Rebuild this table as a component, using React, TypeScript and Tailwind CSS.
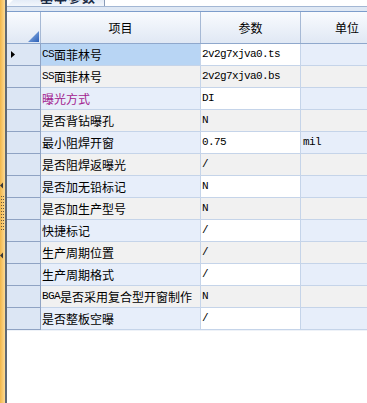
import React from 'react';

type Row = { name: string; value: string; unit?: string; accent?: boolean };

const rows: Row[] = [
    { name: 'CS面菲林号', value: '2v2g7xjva0.ts' },
    { name: 'SS面菲林号', value: '2v2g7xjva0.bs' },
    { name: '曝光方式', value: 'DI', accent: true },
    { name: '是否背钻曝孔', value: 'N' },
    { name: '最小阻焊开窗', value: '0.75', unit: 'mil' },
    { name: '是否阻焊返曝光', value: '/' },
    { name: '是否加无铅标记', value: 'N' },
    { name: '是否加生产型号', value: 'N' },
    { name: '快捷标记', value: '/' },
    { name: '生产周期位置', value: '/' },
    { name: '生产周期格式', value: '/' },
    { name: 'BGA是否采用复合型开窗制作', value: 'N' },
    { name: '是否整板空曝', value: '/' },
];

// ascii runs use a narrow mono face, the rest stays in the CJK face
const Txt = ({ text }: { text: string }) => (
    <>
        {text.split(/([\x00-\x7f]+)/).filter(Boolean).map((part, i) =>
            /^[\x00-\x7f]+$/.test(part) ? (
                <span key={i} className="font-['Liberation_Mono',monospace] text-[11px] tracking-[-0.6px]">{part}</span>
            ) : (
                <span key={i}>{part}</span>
            )
        )}
    </>
);

const SplitterGrip = () => (
    <div className="w-[5px] shrink-0 bg-linear-to-r from-[#f2b646] to-[#fddb92] flex flex-col">
        <svg width="5" height="80" className="mt-[182px]">
            <polygon points="0,3.5 3,0.5 3,6.5" fill="#3a3a3a" />
            {[0, 1, 2, 3, 4, 5, 6, 7, 8, 9, 10, 11].map(i => (
                <g key={i}>
                    <rect x="1" y={14 + i * 3} width="1" height="1" fill="#6b5a3a" />
                    <rect x="3" y={14 + i * 3} width="1" height="1" fill="#6b5a3a" />
                </g>
            ))}
            <polygon points="0,73.5 3,70.5 3,76.5" fill="#3a3a3a" />
        </svg>
    </div>
);

const TabStrip = () => (
    <div className="h-[12px] shrink-0 flex flex-col">
        <div className="h-[6px] flex">
            <div className="w-[98px] h-[6px] overflow-hidden bg-linear-to-b from-[#e4ecf7] to-[#f3f7fc] border-r border-[#8a9cb8] [clip-path:polygon(6px_0,100%_0,100%_100%,0_100%)]">
                <span className="block -mt-[10px] pl-[33px] text-[13px] font-bold tracking-[1px] text-[#1b2a44] whitespace-nowrap">基本参数</span>
            </div>
            <div className="flex-1 bg-white" />
        </div>
        <div className="h-[1px] bg-[#a3b7d4]" />
        <div className="h-[4px] bg-[#dfe8f4]" />
        <div className="h-[1px] bg-[#7d9dcb]" />
    </div>
);

const HeaderRow = () => (
    <div className="h-[32px] shrink-0 flex border-b border-[#8fa8cc] bg-linear-to-b from-[#f9fbfe] to-[#e0e8f4]">
        <div className="w-[34px] shrink-0 border-r border-[#a6b9d5] flex items-end justify-end pr-[1px] pb-[1px]">
            <svg width="11" height="11">
                <defs>
                    <linearGradient id="corner" x1="0" y1="0" x2="1" y2="1">
                        <stop offset="0" stopColor="#9cc0ee" />
                        <stop offset="1" stopColor="#2c5fb6" />
                    </linearGradient>
                </defs>
                <polygon points="11,0 11,11 0,11" fill="url(#corner)" />
            </svg>
        </div>
        <div className="w-[160px] shrink-0 border-r border-[#a6b9d5] flex items-center justify-center">项目</div>
        <div className="w-[100px] shrink-0 border-r border-[#a6b9d5] flex items-center justify-center">参数</div>
        <div className="w-[92px] shrink-0 flex items-center justify-center">单位</div>
    </div>
);

const DataRow = ({ row, index }: { row: Row; index: number }) => {
    const odd = index % 2 === 1;
    const selected = index === 0;
    const nameBg = selected ? 'bg-[#b8d5f4]' : odd ? 'bg-[#f1f1f1]' : 'bg-[#e7eefa]';
    const valueBg = odd ? 'bg-[#f1f1f1]' : 'bg-white';
    const unitBg = odd ? 'bg-[#f1f1f1]' : 'bg-[#e7eefa]';

    return (
        <div className="h-[22px] shrink-0 flex">
            <div className="w-[34px] shrink-0 bg-[#dce6f4] border-r border-b border-[#8fa3c3] flex items-center pl-[4px]">
                {selected && (
                    <svg width="4" height="7">
                        <polygon points="0,0 4,3.5 0,7" fill="#000" />
                    </svg>
                )}
            </div>
            <div className={`w-[160px] shrink-0 border-r border-b border-[#c5d4e9] pl-[1px] flex items-center overflow-hidden whitespace-nowrap ${nameBg} ${row.accent ? 'text-[#a3228f]' : ''}`}>
                <Txt text={row.name} />
            </div>
            <div className={`w-[100px] shrink-0 border-r border-b border-[#c5d4e9] pl-[1px] flex items-center whitespace-nowrap ${valueBg}`}>
                <Txt text={row.value} />
            </div>
            <div className={`w-[92px] shrink-0 border-b border-[#c5d4e9] pl-[2px] flex items-center ${unitBg}`}>
                {row.unit && <Txt text={row.unit} />}
            </div>
        </div>
    );
};

const App: React.FC = () => {
    return (
        <div className="w-[367px] h-[403px] overflow-hidden flex bg-white text-[12px] leading-none text-black font-['Noto_Sans_CJK_SC','Noto_Sans',sans-serif]">
            <SplitterGrip />
            <div className="w-[2px] shrink-0 bg-[#5e6874]" />
            <div className="flex-1 min-w-0 flex flex-col overflow-hidden">
                <TabStrip />
                <HeaderRow />
                {rows.map((row, i) => (
                    <DataRow key={row.name} row={row} index={i} />
                ))}
                <div className="h-[1px] bg-[#eef2f8]" />
            </div>
        </div>
    );
};

export default App;
